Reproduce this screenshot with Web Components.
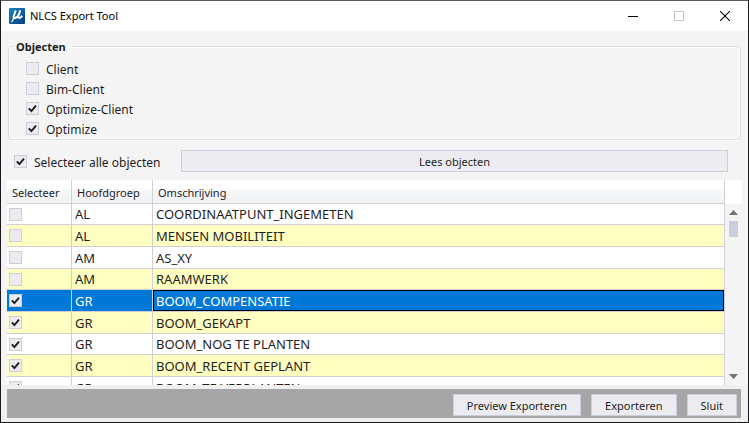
<!DOCTYPE html>
<html lang="nl">
<head>
<meta charset="utf-8">
<title>NLCS Export Tool</title>
<style>
  html, body {
    height: 100%;
    margin: 0;
  }
  body {
    font: 12px/16px "Noto Sans", "Open Sans", sans-serif;
    color: #1e1e1e;
    --face: #ececf0;
    --edge: #cccedb;
    --small: 11px;
  }
  .options {
    display: flex;
    flex-direction: column;
    gap: 4px;
  }
</style>
</head>
<body>
  <app-window caption="NLCS Export Tool">
    <group-box caption="Objecten">
      <div class="options">
        <check-box label="Client"></check-box>
        <check-box label="Bim-Client"></check-box>
        <check-box label="Optimize-Client" checked></check-box>
        <check-box label="Optimize" checked></check-box>
      </div>
    </group-box>
    <read-bar>
      <check-box label="Selecteer alle objecten" checked></check-box>
      <push-button slot="action">Lees objecten</push-button>
    </read-bar>
    <object-grid></object-grid>
    <action-bar slot="footer">
      <push-button>Preview Exporteren</push-button>
      <push-button>Exporteren</push-button>
      <push-button>Sluit</push-button>
    </action-bar>
  </app-window>

<script>
const checkStyle = `
  .box {
    display: grid;
    flex: none;
    width: 13px;
    height: 13px;
  }
  .box > * {
    grid-area: 1 / 1;
  }
  .box input {
    appearance: none;
    box-sizing: border-box;
    width: 13px;
    height: 13px;
    margin: 0;
    border: 1px solid var(--edge);
    background: var(--face);
  }
  .box svg {
    visibility: hidden;
    pointer-events: none;
    z-index: 1;
  }
  .box input:checked + svg {
    visibility: visible;
  }
`;

const tick = `<svg width="13" height="13" viewBox="0 0 13 13" aria-hidden="true">
  <path d="M2.8 6.4 5.4 9 10 3.6" fill="none" stroke="#1e1e1e" stroke-width="1.9"/>
</svg>`;

class CheckBox extends HTMLElement {
  constructor() {
    super();
    this.attachShadow({ mode: "open" });
  }

  connectedCallback() {
    this.shadowRoot.innerHTML = `
      <style>
        :host { display: block; }
        label { display: flex; align-items: center; gap: 7px; }
        .text { padding-top: 2px; margin-bottom: -2px; }
        ${checkStyle}
      </style>
      <label>
        <span class="box"><input type="checkbox" ${this.hasAttribute("checked") ? "checked" : ""}>${tick}</span>
        <span class="text">${this.getAttribute("label")}</span>
      </label>
    `;
  }
}

class PushButton extends HTMLElement {
  constructor() {
    super();
    this.attachShadow({ mode: "open" });
    this.shadowRoot.innerHTML = `
      <style>
        :host { display: block; }
        button {
          display: block;
          width: 100%;
          height: 22px;
          padding: 1px 13px 0;
          border: 1px solid var(--edge);
          background: var(--face);
          color: inherit;
          font: inherit;
          font-size: var(--small);
          white-space: nowrap;
        }
      </style>
      <button type="button"><slot></slot></button>
    `;
  }
}

class GroupBox extends HTMLElement {
  constructor() {
    super();
    this.attachShadow({ mode: "open" });
  }

  connectedCallback() {
    this.shadowRoot.innerHTML = `
      <style>
        :host { display: block; margin: 0 1px; }
        fieldset {
          min-width: 0;
          margin: 0;
          padding: 6px 17px 3px;
          border: 1px solid #d5dfe5;
          border-radius: 4px;
          box-shadow: inset 0 0 0 1px #fff, 0 1px #fff;
        }
        legend {
          margin-left: -13px;
          padding: 1px 7px 0 3px;
          font-size: var(--small);
          font-weight: bold;
          line-height: 15px;
        }
      </style>
      <fieldset>
        <legend>${this.getAttribute("caption")}</legend>
        <slot></slot>
      </fieldset>
    `;
  }
}

class ReadBar extends HTMLElement {
  constructor() {
    super();
    this.attachShadow({ mode: "open" });
    this.shadowRoot.innerHTML = `
      <style>
        :host {
          display: flex;
          align-items: center;
          padding: 10px 14px 8px 7px;
        }
        .all { flex: 0 0 167px; }
        .action { flex: 1; }
      </style>
      <div class="all"><slot></slot></div>
      <div class="action"><slot name="action"></slot></div>
    `;
  }
}

const rows = [
  ["AL", "COORDINAATPUNT_INGEMETEN", false],
  ["AL", "MENSEN MOBILITEIT", false],
  ["AM", "AS_XY", false],
  ["AM", "RAAMWERK", false],
  ["GR", "BOOM_COMPENSATIE", true],
  ["GR", "BOOM_GEKAPT", true],
  ["GR", "BOOM_NOG TE PLANTEN", true],
  ["GR", "BOOM_RECENT GEPLANT", true],
  ["GR", "BOOM_TE VERPLANTEN", true],
];
const selectedRow = 4;

class ObjectGrid extends HTMLElement {
  constructor() {
    super();
    this.attachShadow({ mode: "open" });

    const body = rows.map(([group, name, checked], i) => `
      <tr class="${i === selectedRow ? "selected" : ""}">
        <td><span class="box"><input type="checkbox" aria-label="${name}" ${checked ? "checked" : ""}>${tick}</span></td>
        <td>${group}</td>
        <td>${name}</td>
      </tr>`).join("");

    this.shadowRoot.innerHTML = `
      <style>
        :host {
          display: flex;
          flex: 1;
          min-height: 0;
        }
        .view {
          flex: 1;
          overflow: hidden;
          background: #fff;
        }
        table {
          width: 100%;
          table-layout: fixed;
          border-collapse: separate;
          border-spacing: 0;
        }
        th, td {
          box-sizing: border-box;
          border: solid #d0d0d4;
          border-width: 0 1px 1px 0;
          text-align: left;
          white-space: nowrap;
        }
        th {
          position: sticky;
          top: 0;
          z-index: 2;
          height: 24px;
          padding: 3px 5px 0;
          background: linear-gradient(#fff 9px, #f7f8fa 9px, #f0f1f4);
          font-size: var(--small);
          font-weight: normal;
        }
        th:nth-child(1) { width: 65px; }
        th:nth-child(2) { width: 81px; }
        td {
          height: 22px;
          padding: 1px 3px 0;
          font-size: 13px;
          line-height: 19px;
        }
        td:first-child { padding: 0 2px; }
        tr:nth-child(3n + 1) td { height: 21px; }
        tr:nth-child(even) td { background: #ffffc1; }
        tr.selected td {
          background: #0078d7;
          color: #fff;
        }
        tr.selected td:last-child { box-shadow: inset 0 0 0 1px #000; }
        ${checkStyle}
        .bar {
          display: flex;
          flex-direction: column;
          align-items: center;
          flex: 0 0 17px;
          background: #f4f4f4;
        }
        .corner {
          align-self: stretch;
          height: 24px;
          background: #fff;
        }
        .bar button {
          display: flex;
          align-items: center;
          justify-content: center;
          width: 17px;
          height: 17px;
          padding: 0;
          border: 0;
          background: none;
        }
        .track { flex: 1; }
        .thumb {
          width: 9px;
          height: 16px;
          background: #cccedb;
        }
      </style>
      <div class="view">
        <table>
          <thead>
            <tr><th>Selecteer</th><th>Hoofdgroep</th><th>Omschrijving</th></tr>
          </thead>
          <tbody>${body}</tbody>
        </table>
      </div>
      <div class="bar">
        <div class="corner"></div>
        <button type="button" class="up" aria-label="Omhoog">
          <svg width="9" height="5"><path d="M0 5 4.5 0 9 5z" fill="#717171"/></svg>
        </button>
        <div class="track"><div class="thumb"></div></div>
        <button type="button" class="down" aria-label="Omlaag">
          <svg width="9" height="5"><path d="M0 0 4.5 5 9 0z" fill="#717171"/></svg>
        </button>
      </div>
    `;

    const view = this.shadowRoot.querySelector(".view");
    this.shadowRoot.querySelector(".up").addEventListener("click", () => view.scrollBy(0, -22));
    this.shadowRoot.querySelector(".down").addEventListener("click", () => view.scrollBy(0, 22));
  }
}

class ActionBar extends HTMLElement {
  constructor() {
    super();
    this.attachShadow({ mode: "open" });
    this.shadowRoot.innerHTML = `
      <style>
        :host {
          display: flex;
          justify-content: flex-end;
          gap: 10px;
          padding: 5px 4px 2px;
          background: #a6a6a6;
        }
      </style>
      <slot></slot>
    `;
  }
}

class AppWindow extends HTMLElement {
  constructor() {
    super();
    this.attachShadow({ mode: "open" });
  }

  connectedCallback() {
    this.shadowRoot.innerHTML = `
      <style>
        :host {
          box-sizing: border-box;
          display: flex;
          flex-direction: column;
          height: 100vh;
          border: 1px solid #1b191c;
          border-top-color: #5c5a5c;
          background: #f0f0f0;
        }
        header {
          display: flex;
          align-items: center;
          height: 30px;
          padding-left: 8px;
          background: #fff;
          color: #000;
        }
        h1 {
          flex: 1;
          margin: 0 0 0 5px;
          font-size: var(--small);
          font-weight: normal;
        }
        header button {
          display: flex;
          align-items: center;
          justify-content: center;
          width: 46px;
          height: 30px;
          padding: 0;
          border: 0;
          background: none;
        }
        main {
          display: flex;
          flex: 1;
          flex-direction: column;
          min-height: 0;
          padding: 7px 6px 0;
          background: #f4f4f4;
        }
        footer { padding: 4px 7px 4px 6px; }
      </style>
      <header>
        <svg width="16" height="16" viewBox="0 0 16 16" aria-hidden="true">
          <defs>
            <linearGradient id="blue" x1="0" y1="0" x2="1" y2="1">
              <stop offset="0" stop-color="#1d84bf"/>
              <stop offset="1" stop-color="#083e80"/>
            </linearGradient>
          </defs>
          <rect width="16" height="16" rx="1" fill="url(#blue)"/>
          <path d="M6.8 2.4 4.6 8.6Q4.3 10.2 6 10 8.6 9.6 9.8 6.4L11.4 2.4M11.4 2.4 9.4 8Q8.9 10.2 10.6 9.9 12.2 9.5 13.2 7.8" fill="none" stroke="#fff" stroke-width="1.9"/>
          <path d="M2 14.4 5 7.6 5.6 9.8 3.8 13.2z" fill="#fff"/>
        </svg>
        <h1>${this.getAttribute("caption")}</h1>
        <button type="button" aria-label="Minimaliseren">
          <svg width="10" height="10"><path d="M0 5.5H10" stroke="#000"/></svg>
        </button>
        <button type="button" aria-label="Maximaliseren" disabled>
          <svg width="10" height="10"><path d="M.5.5h9v9h-9z" fill="none" stroke="#c4c4c4"/></svg>
        </button>
        <button type="button" aria-label="Sluiten">
          <svg width="10" height="10"><path d="M0 0 10 10M10 0 0 10" stroke="#000" stroke-width="1.1"/></svg>
        </button>
      </header>
      <main><slot></slot></main>
      <footer><slot name="footer"></slot></footer>
    `;
  }
}

customElements.define("check-box", CheckBox);
customElements.define("push-button", PushButton);
customElements.define("group-box", GroupBox);
customElements.define("read-bar", ReadBar);
customElements.define("object-grid", ObjectGrid);
customElements.define("action-bar", ActionBar);
customElements.define("app-window", AppWindow);
</script>
</body>
</html>
